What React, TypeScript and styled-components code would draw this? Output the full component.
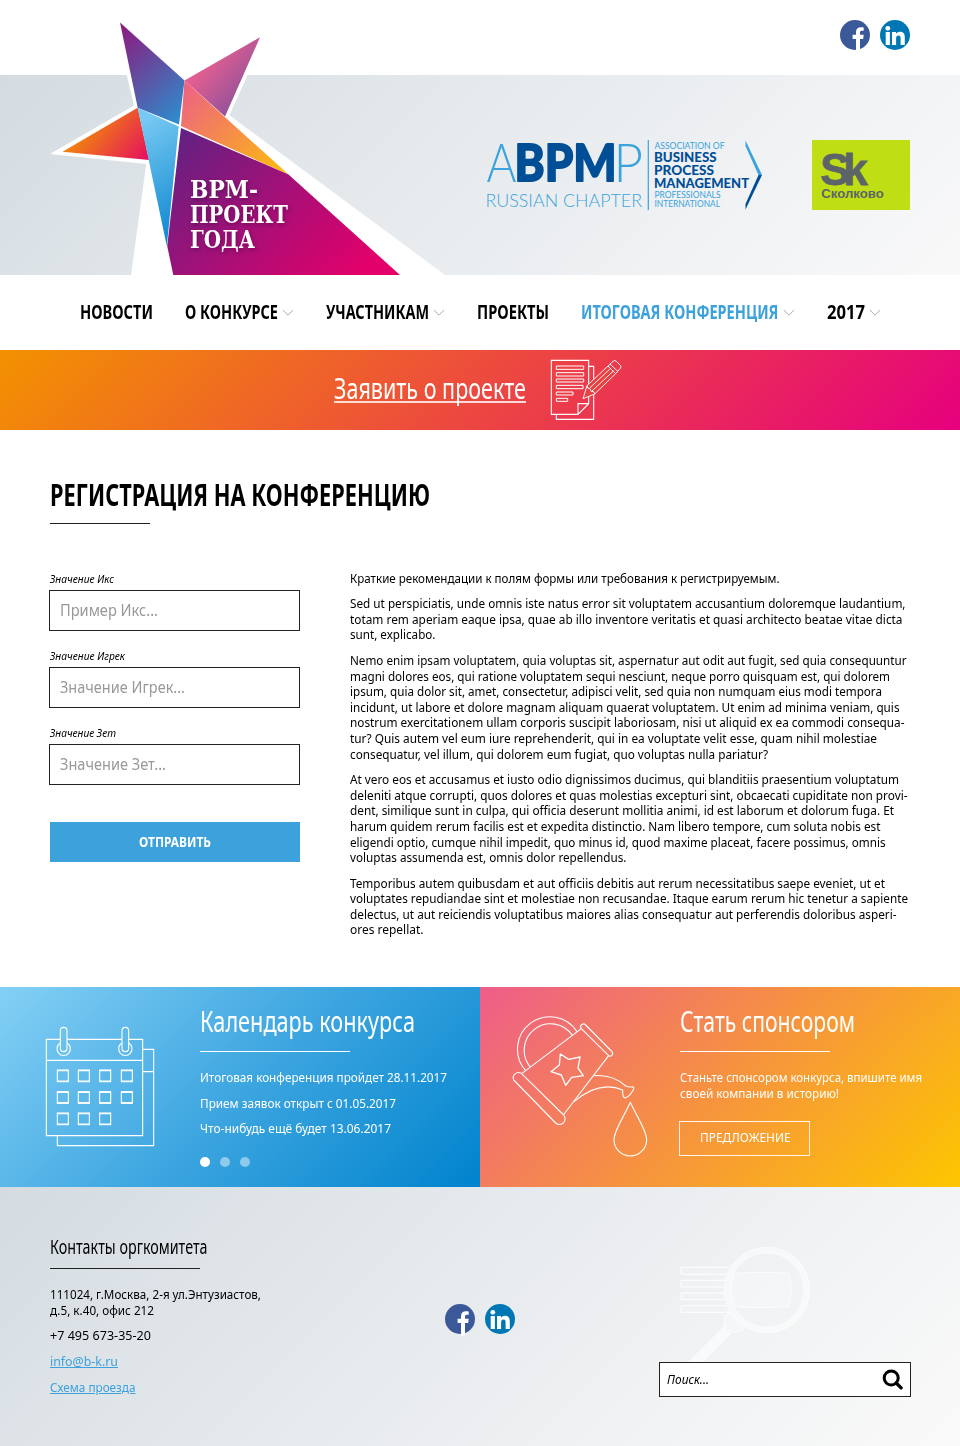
import React, { useLayoutEffect, useRef, useState } from "react";
import styled, { createGlobalStyle } from "styled-components";

const GlobalStyle = createGlobalStyle`
  * { box-sizing: border-box; }
  body { margin: 0; background: #fff; color: #000; font-family: "Noto Sans", "Open Sans", sans-serif; }
  a { color: inherit; text-decoration: none; }
  p, h1, h2, h3 { margin: 0; font-weight: 400; }
  svg { display: block; flex: none; }
`;

/* ---------- condensed text ---------- */

const FitBox = styled.span<{ $w: number }>`
  display: inline-block;
  width: ${(p) => p.$w}px;
  vertical-align: top;
`;
const FitInner = styled.span`
  display: inline-block;
  white-space: nowrap;
  transform-origin: 0 50%;
`;

/* Narrows a single line of text so that it takes exactly `w` pixels. */
function Fit({ w, children }: { w: number; children: React.ReactNode }) {
  const ref = useRef<HTMLSpanElement>(null);
  const [scale, setScale] = useState(1);
  useLayoutEffect(() => {
    if (ref.current) {
      const style = window.getComputedStyle(ref.current);
      const natural = parseFloat(style.width) || ref.current.offsetWidth;
      setScale(w / natural);
    }
  }, [w]);
  return (
    <FitBox $w={w}>
      <FitInner ref={ref} style={{ transform: `scaleX(${scale})` }}>
        {children}
      </FitInner>
    </FitBox>
  );
}

/* ---------- layout ---------- */

const Page = styled.div`
  width: 960px;
  background: #fff;
`;
const Header = styled.header`
  position: relative;
`;
const TopBar = styled.div`
  height: 75px;
  padding: 20px 50px 0;
  display: flex;
  justify-content: flex-end;
`;
const Hero = styled.div`
  height: 200px;
  padding: 0 50px;
  display: flex;
  justify-content: flex-end;
  align-items: center;
  gap: 48px;
  background: linear-gradient(135deg, #d4dce1 0%, #e6eaed 45%, #f9f9fa 100%);
`;
const StarLogo = styled.svg`
  position: absolute;
  left: 0;
  top: 0;
`;
const Social = styled.div`
  display: flex;
  gap: 10px;
`;
const Nav = styled.nav`
  height: 75px;
  padding: 0 0 2px 80px;
  display: flex;
  align-items: center;
  gap: 32px;
`;
const NavItem = styled.a<{ $active?: boolean }>`
  display: flex;
  align-items: center;
  gap: 4px;
  font-size: 19.5px;
  line-height: 26px;
  font-weight: 700;
  color: ${(p) => (p.$active ? "#3da1dc" : "#000")};
`;
const Banner = styled.div`
  height: 80px;
  padding-left: 334px;
  display: flex;
  align-items: flex-start;
  gap: 24px;
  color: #fff;
  background: linear-gradient(135deg, #f39200 0%, #e6007e 100%);
`;
const BannerLink = styled.a`
  margin-top: 18px;
  height: 35px;
  font-size: 28.5px;
  line-height: 40px;
  border-bottom: 2px solid rgba(255, 255, 255, 0.8);
`;
const BannerIcon = styled.div`
  margin-top: 8px;
`;
const Main = styled.main`
  height: 557px;
  padding: 47px 50px 0;
`;
const PageTitle = styled.h1`
  height: 46px;
  font-size: 29.5px;
  line-height: 36px;
  font-weight: 700;
`;
const Rule = styled.div<{ $w: number; $c: string }>`
  width: ${(p) => p.$w}px;
  height: 1px;
  background: ${(p) => p.$c};
`;
const Columns = styled.div`
  margin-top: 46px;
  display: grid;
  grid-template-columns: 250px 1fr;
  column-gap: 50px;
`;
const Form = styled.div`
  display: flex;
  flex-direction: column;
`;
const Label = styled.label`
  height: 20px;
  padding-top: 2px;
  font-size: 11.2px;
  line-height: 14px;
  font-style: italic;
`;
const Field = styled.div`
  width: 251px;
  height: 41px;
  margin: 0 0 16px -1px;
  padding-left: 10px;
  border: 1px solid #222;
  background: #fff;
  font-size: 15.9px;
  line-height: 38px;
  color: #999;
`;
const Submit = styled.button`
  width: 250px;
  height: 40px;
  margin-top: 21px;
  padding: 0 0 2px;
  border: 0;
  background: #3da1dc;
  color: #fff;
  font: 700 15px/38px "Noto Sans", sans-serif;
`;
const Article = styled.div`
  padding-top: 0.6px;
  display: flex;
  flex-direction: column;
  gap: 10px;
  font-size: 13px;
  line-height: 15.6px;
`;
const Para = styled.p`
  display: flex;
  flex-direction: column;
`;
const Panels = styled.section`
  display: grid;
  grid-template-columns: 480px 480px;
  height: 200px;
`;
const Panel = styled.div<{ $from: string; $mid: string; $to: string }>`
  display: grid;
  grid-template-columns: 200px 280px;
  color: #fff;
  background: linear-gradient(135deg, ${(p) => p.$from} 0%, ${(p) => p.$mid} 50%, ${(p) => p.$to} 100%);
`;
const PanelArt = styled.div<{ $x: number; $y: number }>`
  padding: ${(p) => p.$y}px 0 0 ${(p) => p.$x}px;
`;
const PanelBody = styled.div`
  padding-top: 14px;
  font-size: 13px;
  line-height: 15.6px;
`;
const PanelTitle = styled.h2`
  height: 50px;
  font-size: 28.5px;
  line-height: 40px;
`;
const PanelText = styled.div`
  margin-top: 18px;
  display: flex;
  flex-direction: column;
  gap: 10px;
`;
const Dots = styled.div`
  margin-top: 20px;
  display: flex;
  gap: 10px;
`;
const Dot = styled.span<{ $on?: boolean }>`
  width: 10px;
  height: 10px;
  border-radius: 50%;
  background: #fff;
  opacity: ${(p) => (p.$on ? 1 : 0.45)};
`;
const Outline = styled.button`
  width: 131px;
  height: 35px;
  margin: 20px 0 0 -1px;
  padding: 0 0 2px 20px;
  border: 1px solid rgba(255, 255, 255, 0.9);
  background: transparent;
  color: #fff;
  text-align: left;
  font: 400 13px/31px "Noto Sans", sans-serif;
`;
const Footer = styled.footer`
  height: 259px;
  padding: 0 0 0 50px;
  display: grid;
  grid-template-columns: 395px 214px 252px;
  background: linear-gradient(135deg, #d4dce1 0%, #e9ecef 50%, #fafafa 100%);
`;
const Contacts = styled.div`
  padding-top: 47px;
  font-size: 13px;
  line-height: 15.6px;
`;
const ContactsTitle = styled.h3`
  height: 34px;
  font-size: 19.3px;
  line-height: 26px;
`;
const ContactsList = styled.div`
  margin-top: 18.3px;
  display: flex;
  flex-direction: column;
  gap: 10px;
`;
const BlueLink = styled.a`
  color: #3da1dc;
  text-decoration: underline;
`;
const FooterSocial = styled.div`
  padding-top: 117px;
`;
const SearchCol = styled.div`
  padding-top: 59px;
`;
const SearchArt = styled.div`
  padding-left: 20px;
`;
const SearchBox = styled.div`
  height: 35px;
  padding: 0 7px;
  display: flex;
  justify-content: space-between;
  align-items: center;
  border: 1px solid #222;
  background: #fff;
  font-size: 12.6px;
  line-height: 32px;
  font-style: italic;
`;

/* ---------- drawings ---------- */

const Facebook = () => (
  <svg width="30" height="32" viewBox="0 0 30 32">
    <circle cx="15" cy="15" r="15" fill="#3b5998" />
    <path
      d="M16 31.8V19h-3.4v-4.3H16v-2.6c0-3.3 1.9-4.9 4.9-4.9 1.2 0 2.3.1 2.8.2v3.400h-1.900c-1.400 0-1.800.8-1.800 1.800v2.100h3.700l-.5 4.300H20v12.800z"
      fill="#fff"
    />
  </svg>
);
const LinkedIn = () => (
  <svg width="30" height="30" viewBox="0 0 30 30">
    <circle cx="15" cy="15" r="15" fill="#0077b5" />
    <circle cx="7.8" cy="8.3" r="2.4" fill="#fff" />
    <path
      d="M5.700 12h4.200V25H5.700zM12 12h4v1.800c.6-1.100 1.900-2.100 3.900-2.100 4 0 4.900 2.600 4.900 6V25h-4.200v-6.300c0-1.600-.1-3.300-2.100-3.300s-2.400 1.600-2.400 3.200V25H12z"
      fill="#fff"
    />
  </svg>
);
const Chevron = () => (
  <svg width="12" height="8" viewBox="0 0 12 8" style={{ marginTop: 2 }}>
    <path d="M.8 1l5.200 5.200L11.200 1" fill="none" stroke="#aaa" strokeWidth="1" />
  </svg>
);

const Star = () => (
  <StarLogo width="450" height="275" viewBox="0 0 450 275">
    <defs>
      <linearGradient id="s1" gradientUnits="userSpaceOnUse" x1="115" y1="35" x2="190" y2="115">
        <stop offset="0" stopColor="#8b1d82" />
        <stop offset=".5" stopColor="#5b55a5" />
        <stop offset="1" stopColor="#2b8fd0" />
      </linearGradient>
      <linearGradient id="s2" gradientUnits="userSpaceOnUse" x1="205" y1="62" x2="248" y2="100">
        <stop offset="0" stopColor="#e55f90" />
        <stop offset="1" stopColor="#8d509c" />
      </linearGradient>
      <linearGradient id="s3" gradientUnits="userSpaceOnUse" x1="175" y1="95" x2="270" y2="180">
        <stop offset="0" stopColor="#ed6284" />
        <stop offset=".5" stopColor="#f58b4c" />
        <stop offset="1" stopColor="#fcb812" />
      </linearGradient>
      <linearGradient id="s4" gradientUnits="userSpaceOnUse" x1="88" y1="125" x2="140" y2="168">
        <stop offset="0" stopColor="#f08110" />
        <stop offset="1" stopColor="#e6105f" />
      </linearGradient>
      <linearGradient id="s5" gradientUnits="userSpaceOnUse" x1="135" y1="125" x2="195" y2="225">
        <stop offset="0" stopColor="#76c9f2" />
        <stop offset="1" stopColor="#0f88d0" />
      </linearGradient>
      <linearGradient id="s6" gradientUnits="userSpaceOnUse" x1="165" y1="150" x2="325" y2="310">
        <stop offset="0" stopColor="#642182" />
        <stop offset=".5" stopColor="#a51077" />
        <stop offset="1" stopColor="#e3006a" />
      </linearGradient>
    </defs>
    <path d="M126.500 74L134 105.500 50 154l96.200 10L131 275h314L229.500 115.300 248 74z" fill="#fff" />
    <path d="M120 22.500L184.500 80.500 179 124.500 137.700 107.700z" fill="url(#s1)" />
    <path d="M260 37.300L184.500 80.500 225 116.500z" fill="url(#s2)" />
    <path d="M184.500 80.500L288.500 174.500 181 126z" fill="url(#s3)" />
    <path d="M137.700 107.700L62.500 151.700 149 160z" fill="url(#s4)" />
    <path d="M137.700 107.700L178.700 126.600 166.800 246z" fill="url(#s5)" />
    <path d="M181 128L288.500 174.500 400 275H173.300L167.200 246z" fill="url(#s6)" />
    <g
      fill="#fff"
      fontFamily="'DejaVu Serif', serif"
      fontWeight="700"
      fontSize="23.5"
      style={{ filter: "drop-shadow(1px 2px 2px rgba(50,0,50,.45))" }}
    >
      <text x="190" y="198" textLength="68" lengthAdjust="spacingAndGlyphs">ВРМ-</text>
      <text x="190" y="223" textLength="98" lengthAdjust="spacingAndGlyphs">ПРОЕКТ</text>
      <text x="190" y="248.200" textLength="65" lengthAdjust="spacingAndGlyphs">ГОДА</text>
    </g>
  </StarLogo>
);

const Abpmp = () => (
  <svg width="278" height="98" viewBox="486 126 278 98" fontFamily="Lato, sans-serif">
    <g fill="#3aa2dc" fontWeight="300">
      <text x="486.500" y="181.700" fontSize="53" textLength="30" lengthAdjust="spacingAndGlyphs">A</text>
      <text x="613.500" y="181.700" fontSize="53" textLength="29.500" lengthAdjust="spacingAndGlyphs">P</text>
      <text x="485.500" y="206.700" fontSize="18.500" textLength="156.500" lengthAdjust="spacingAndGlyphs">RUSSIAN CHAPTER</text>
    </g>
    <g fill="#3aa2dc">
      <text x="654.500" y="149.300" fontSize="9.200" textLength="70" lengthAdjust="spacingAndGlyphs">ASSOCIATION OF</text>
      <text x="654.500" y="197.700" fontSize="9.200" textLength="66" lengthAdjust="spacingAndGlyphs">PROFESSIONALS</text>
      <text x="654.500" y="206.700" fontSize="9.200" textLength="65.500" lengthAdjust="spacingAndGlyphs">INTERNATIONAL</text>
    </g>
    <g fill="#004f96" fontWeight="900">
      <text x="514.500" y="181" fontSize="51.500" textLength="102" lengthAdjust="spacingAndGlyphs" stroke="#004f96" strokeWidth="1.800" strokeLinejoin="round">BPM</text>
      <text x="654" y="161.700" fontSize="13" textLength="62.500" lengthAdjust="spacingAndGlyphs">BUSINESS</text>
      <text x="654" y="174.700" fontSize="13" textLength="60" lengthAdjust="spacingAndGlyphs">PROCESS</text>
      <text x="654" y="187.700" fontSize="13" textLength="95" lengthAdjust="spacingAndGlyphs">MANAGEMENT</text>
    </g>
    <path d="M648.300 140v70" stroke="#3aa2dc" strokeWidth="1.200" />
    <path d="M745.500 140.500v5.500l13 29h3.500z" fill="#3aa2dc" />
    <path d="M762 175h-3.500l-13 29v5.500z" fill="#004f96" />
  </svg>
);

const Skolkovo = () => (
  <svg width="98" height="70" viewBox="812 140 98 70" fontFamily="'Liberation Sans', Arial, sans-serif" fontWeight="700">
    <path d="M812 140h98v70h-98z" fill="#c0de14" />
    <g fill="#5d6467">
      <text x="820.300" y="184.500" fontSize="44" letterSpacing="-6.500" stroke="#5d6467" strokeWidth=".8">Sk</text>
      <text x="821.300" y="197.700" fontSize="13.500" textLength="62.500" lengthAdjust="spacingAndGlyphs">Сколково</text>
    </g>
  </svg>
);

const DocIcon = () => (
  <svg width="74" height="63" viewBox="690 39 222 189" fill="none" stroke="#fff" strokeWidth="3.300">
    <path d="M806 64h15v159H709v-15" />
    <path d="M694 46h112v130l-32 32h-80zM774 208v-32h32" />
    <path d="M709 63h82v10h-82zM709 83h82v10h-82zM709 102h82v9h-82zM709 121h80v10h-80zM709 141h50v9h-50zM709 160h34v9h-34z" strokeWidth="3" />
    <path d="M789 161l12-40 63-58 22 24-61 60z" fill="#ea4040" stroke="none" />
    <path d="M789 161l12-39 63-59 23 23-63 61zM801 122l2 7 7 2 3 8 8 1 3 7M808 130l64-60M816 138l64-60M864 63l15-14q5-5 10 0l12 12q4 4 0 9l-14 16M870 57l24 23" strokeWidth="2.800" />
  </svg>
);

const squares: [number, number][] = [];
[255, 320, 384].forEach((y, r) =>
  [82, 145, 209, 274].forEach((x, c) => {
    if (!(r === 2 && c === 3)) squares.push([x, y]);
  })
);
const CalendarIcon = () => (
  <svg width="112" height="124" viewBox="45 120 336 372" fill="none" stroke="#fff" strokeWidth="3.300">
    <path d="M90 163H49v289h289V163h-41M276 163H111M49 226h289M338 193h33v289H82v-30M338 260h33" />
    {[101, 286].map((x) => (
      <g key={x}>
        <rect x={x - 10} y="127" width="20" height="73" rx="10" />
        <path d={`M${x - 10} 174a20 20 0 1 0 20 0`} />
      </g>
    ))}
    {squares.map(([x, y]) => (
      <g key={`${x}-${y}`}>
        <rect x={x} y={y} width="33" height="35" />
        <path d={`M${x} ${y + 2}h33M${x} ${y + 33}h33`} />
      </g>
    ))}
  </svg>
);

const CanIcon = () => (
  <svg width="140" height="145" viewBox="90 84 420 435" fill="none" stroke="#fff" strokeWidth="3.300" strokeLinejoin="round">
    <path d="M137 257A97 97 0 1 1 291 140M151 246A79 79 0 1 1 277 151" />
    <path d="M317 120l80 81a8 8 0 0 1-11 11l-82-81a8 8 0 0 1 13-11z" />
    <path d="M304 131L126 265M386 212L250 390" />
    <path d="M124 265l127 125a17 17 0 0 1-24 24L101 285a16 16 0 0 1 23-20z" />
    <path d="M241 207l25 16 34-7-6 33 16 23-35 5-18 24-13-31-31-10 25-20z" strokeWidth="4" />
    <path d="M343 272q56-4 94 31 12 5 22 2 6 3-2 14-8 16-22 20-8-2-7-24-70-30-146 35" />
    <path d="M451 352c-20 45-49 84-49 112a49 49 0 0 0 98 0c0-28-29-67-49-112z" />
  </svg>
);

const LensIcon = () => (
  <svg width="132" height="116" viewBox="117 48 396 348" fill="none" stroke="#fff" strokeWidth="3">
    <path d="M268 112H123v21h135M254 151H123v20h129M252 189H123v20h131M259 227H123v20h150" fill="rgba(255,255,255,.1)" opacity=".9" />
    <path d="M285 130q80-7 160 0 18 50 0 100-80 6-160 0-24-50 0-100z" fill="rgba(255,255,255,.35)" opacity=".8" />
    <circle cx="381" cy="180" r="120" strokeWidth="18" opacity=".5" />
    <circle cx="381" cy="180" r="128" strokeWidth="2.500" opacity=".7" />
    <circle cx="381" cy="180" r="111" strokeWidth="2.500" opacity=".7" />
    <path d="M268 247q-20 16-15 38 8 20 32 22 18-1 28-13-28-17-45-47z" fill="rgba(255,255,255,.4)" opacity=".8" />
    <path d="M253 287L142 398h46l88-89q-18-6-23-22z" fill="#fff" stroke="none" opacity=".6" />
  </svg>
);

const SearchIcon = () => (
  <svg width="21" height="21" viewBox="0 0 21 21" fill="none" stroke="#000">
    <circle cx="9.200" cy="9" r="7" strokeWidth="3" />
    <path d="M14.200 14l4.900 4.900" strokeWidth="3.300" strokeLinecap="round" />
  </svg>
);

/* ---------- content ---------- */

const nav: { text: string; w: number; menu?: boolean; active?: boolean }[] = [
  { text: "НОВОСТИ", w: 73 },
  { text: "О КОНКУРСЕ", w: 93, menu: true },
  { text: "УЧАСТНИКАМ", w: 103, menu: true },
  { text: "ПРОЕКТЫ", w: 72 },
  { text: "ИТОГОВАЯ КОНФЕРЕНЦИЯ", w: 197.5, menu: true, active: true },
  { text: "2017", w: 38, menu: true },
];

const fields = [
  { label: "Значение Икс", lw: 64, hint: "Пример Икс...", hw: 98 },
  { label: "Значение Игрек", lw: 75, hint: "Значение Игрек...", hw: 125 },
  { label: "Значение Зет", lw: 66, hint: "Значение Зет...", hw: 106 },
];

const article: [string, number][][] = [
  [["Краткие рекомендации к полям формы или требования к регистрируемым.", 429.5]],
  [
    ["Sed ut perspiciatis, unde omnis iste natus error sit voluptatem accusantium doloremque laudantium,", 555.5],
    ["totam rem aperiam eaque ipsa, quae ab illo inventore veritatis et quasi architecto beatae vitae dicta", 552.5],
    ["sunt, explicabo.", 85.5],
  ],
  [
    ["Nemo enim ipsam voluptatem, quia voluptas sit, aspernatur aut odit aut fugit, sed quia consequuntur", 556.5],
    ["magni dolores eos, qui ratione voluptatem sequi nesciunt, neque porro quisquam est, qui dolorem", 540],
    ["ipsum, quia dolor sit, amet, consectetur, adipisci velit, sed quia non numquam eius modi tempora", 532],
    ["incidunt, ut labore et dolore magnam aliquam quaerat voluptatem. Ut enim ad minima veniam, quis", 549.5],
    ["nostrum exercitationem ullam corporis suscipit laboriosam, nisi ut aliquid ex ea commodi consequa-", 554.5],
    ["tur? Quis autem vel eum iure reprehenderit, qui in ea voluptate velit esse, quam nihil molestiae", 527],
    ["consequatur, vel illum, qui dolorem eum fugiat, quo voluptas nulla pariatur?", 418],
  ],
  [
    ["At vero eos et accusamus et iusto odio dignissimos ducimus, qui blanditiis praesentium voluptatum", 549],
    ["deleniti atque corrupti, quos dolores et quas molestias excepturi sint, obcaecati cupiditate non provi-", 557.5],
    ["dent, similique sunt in culpa, qui officia deserunt mollitia animi, id est laborum et dolorum fuga. Et", 544],
    ["harum quidem rerum facilis est et expedita distinctio. Nam libero tempore, cum soluta nobis est", 530.5],
    ["eligendi optio, cumque nihil impedit, quo minus id, quod maxime placeat, facere possimus, omnis", 535.5],
    ["voluptas assumenda est, omnis dolor repellendus.", 276.5],
  ],
  [
    ["Temporibus autem quibusdam et aut officiis debitis aut rerum necessitatibus saepe eveniet, ut et", 535],
    ["voluptates repudiandae sint et molestiae non recusandae. Itaque earum rerum hic tenetur a sapiente", 558],
    ["delectus, ut aut reiciendis voluptatibus maiores alias consequatur aut perferendis doloribus asperi-", 546.5],
    ["ores repellat.", 73.5],
  ],
];

export default function App() {
  return (
    <Page>
      <GlobalStyle />
      <Header>
        <TopBar>
          <Social>
            <Facebook />
            <LinkedIn />
          </Social>
        </TopBar>
        <Hero>
          <Abpmp />
          <Skolkovo />
        </Hero>
        <Star />
      </Header>
      <Nav>
        {nav.map((n) => (
          <NavItem key={n.text} $active={n.active}>
            <Fit w={n.w}>{n.text}</Fit>
            {n.menu && <Chevron />}
          </NavItem>
        ))}
      </Nav>
      <Banner>
        <BannerLink>
          <Fit w={192}>Заявить о проекте</Fit>
        </BannerLink>
        <BannerIcon>
          <DocIcon />
        </BannerIcon>
      </Banner>
      <Main>
        <PageTitle>
          <Fit w={380}>РЕГИСТРАЦИЯ НА КОНФЕРЕНЦИЮ</Fit>
        </PageTitle>
        <Rule $w={100} $c="#222" />
        <Columns>
          <Form>
            {fields.map((f) => (
              <React.Fragment key={f.label}>
                <Label>
                  <Fit w={f.lw}>{f.label}</Fit>
                </Label>
                <Field>
                  <Fit w={f.hw}>{f.hint}</Fit>
                </Field>
              </React.Fragment>
            ))}
            <Submit>
              <Fit w={72}>ОТПРАВИТЬ</Fit>
            </Submit>
          </Form>
          <Article>
            {article.map((lines, i) => (
              <Para key={i}>
                {lines.map(([t, w]) => (
                  <Fit key={t} w={w}>
                    {t}
                  </Fit>
                ))}
              </Para>
            ))}
          </Article>
        </Columns>
      </Main>
      <Panels>
        <Panel $from="#84d0f5" $mid="#3ea6e0" $to="#0083cd">
          <PanelArt $x={45} $y={38}>
            <CalendarIcon />
          </PanelArt>
          <PanelBody>
            <PanelTitle>
              <Fit w={215}>Календарь конкурса</Fit>
            </PanelTitle>
            <Rule $w={150} $c="#fff" />
            <PanelText>
              <Fit w={247}>Итоговая конференция пройдет 28.11.2017</Fit>
              <Fit w={196}>Прием заявок открыт с 01.05.2017</Fit>
              <Fit w={191}>Что-нибудь ещё будет 13.06.2017</Fit>
            </PanelText>
            <Dots>
              <Dot $on />
              <Dot />
              <Dot />
            </Dots>
          </PanelBody>
        </Panel>
        <Panel $from="#ee5d8a" $mid="#f6933f" $to="#fdc600">
          <PanelArt $x={30} $y={26}>
            <CanIcon />
          </PanelArt>
          <PanelBody>
            <PanelTitle>
              <Fit w={175}>Стать спонсором</Fit>
            </PanelTitle>
            <Rule $w={150} $c="#fff" />
            <PanelText>
              <Para>
                <Fit w={242}>Станьте спонсором конкурса, впишите имя</Fit>
                <Fit w={159}>своей компании в историю!</Fit>
              </Para>
            </PanelText>
            <Outline>
              <Fit w={90.5}>ПРЕДЛОЖЕНИЕ</Fit>
            </Outline>
          </PanelBody>
        </Panel>
      </Panels>
      <Footer>
        <Contacts>
          <ContactsTitle>
            <Fit w={157.5}>Контакты оргкомитета</Fit>
          </ContactsTitle>
          <Rule $w={150} $c="#222" />
          <ContactsList>
            <Para>
              <Fit w={211}>111024, г.Москва, 2-я ул.Энтузиастов,</Fit>
              <Fit w={104}>д.5, к.40, офис 212</Fit>
            </Para>
            <Fit w={101}>+7 495 673-35-20</Fit>
            <Fit w={68}>
              <BlueLink>info@b-k.ru</BlueLink>
            </Fit>
            <Fit w={85.5}>
              <BlueLink>Схема проезда</BlueLink>
            </Fit>
          </ContactsList>
        </Contacts>
        <FooterSocial>
          <Social>
            <Facebook />
            <LinkedIn />
          </Social>
        </FooterSocial>
        <SearchCol>
          <SearchArt>
            <LensIcon />
          </SearchArt>
          <SearchBox>
            <Fit w={42}>Поиск...</Fit>
            <SearchIcon />
          </SearchBox>
        </SearchCol>
      </Footer>
    </Page>
  );
}
